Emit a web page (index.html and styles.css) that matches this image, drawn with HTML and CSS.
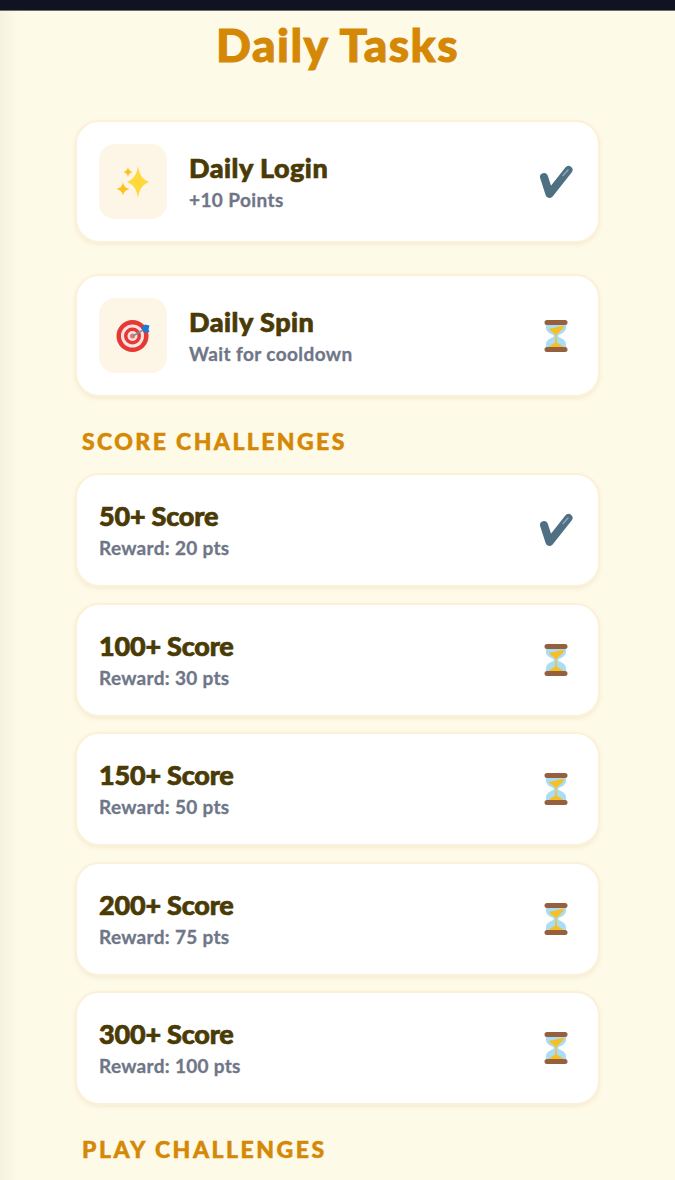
FILE: index.html
```html
<!DOCTYPE html>
<html lang="en">
<head>
  <meta charset="UTF-8">
  <meta name="viewport" content="width=device-width, initial-scale=1.0">
  <title>Daily Tasks</title>
  <link rel="stylesheet" href="styles.css">
</head>
<body>
  <svg class="sprites" width="0" height="0" aria-hidden="true">
    <symbol id="check" viewBox="0 0 34 34">
      <path d="M5 12 L10.500 29 L29.500 5" fill="none" stroke="#4f6f82" stroke-width="8" stroke-linecap="round" stroke-linejoin="round"/>
      <path d="M24 10.500 L29 5" fill="none" stroke="#8fa6b3" stroke-width="1.500" stroke-linecap="round"/>
    </symbol>
    <symbol id="hourglass" viewBox="0 0 34 34">
      <path d="M7 3 H27 V9 C27 14 20 15 19 17 C20 19 27 20 27 25 V31 H7 V25 C7 20 14 19 15 17 C14 15 7 14 7 9 Z" fill="#a9dcf5"/>
      <path d="M10 9.500 C15 10 20 6.500 25 7 C25 11 18.500 13 17.500 17 C16 14 11 13 10 9.500 Z" fill="#f6bf26"/>
      <path d="M16.500 16 H17.500 L18 24 C21 25.500 24 26.500 25 30 H9 C10 26.500 13 25.500 16 24 Z" fill="#f6bf26"/>
      <rect x="5.500" y="1" width="23" height="5" rx="2.500" fill="#96603f"/>
      <rect x="5.500" y="28" width="23" height="5" rx="2.500" fill="#96603f"/>
    </symbol>
  </svg>

  <div class="topbar"></div>

  <main class="page">
    <h1 class="page-title">Daily Tasks</h1>

    <div class="daily-list">
      <div class="task-card">
        <div class="task-icon">
          <svg width="40" height="48" viewBox="0 0 40 48">
            <path d="M25 8 C26.500 17 29 21 36 24 C29 27 26.500 31 25 40 C23.500 31 21 27 14 24 C21 21 23.500 17 25 8 Z" fill="#ffd83b"/>
            <path d="M15 9 C15.700 12 16.800 13.300 19.500 14 C16.800 14.700 15.700 16 15 19 C14.300 16 13.200 14.700 10.500 14 C13.200 13.300 14.300 12 15 9 Z" fill="#fcc21b"/>
            <path d="M10 24 C10.800 28 12.300 30 16.500 31 C12.300 32 10.800 34 10 38 C9.200 34 7.700 32 3.500 31 C7.700 30 9.200 28 10 24 Z" fill="#fcc21b"/>
          </svg>
        </div>
        <div class="task-text">
          <div class="task-name">Daily Login</div>
          <div class="task-sub">+10 Points</div>
        </div>
        <svg class="task-status"><use href="#check"/></svg>
      </div>

      <div class="task-card">
        <div class="task-icon">
          <svg width="40" height="40" viewBox="0 0 40 40">
            <circle cx="19.500" cy="20" r="16" fill="#e53935"/>
            <circle cx="19.500" cy="20" r="11.500" fill="#fbe3e0"/>
            <circle cx="19.500" cy="20" r="8.500" fill="#e53935"/>
            <circle cx="19.500" cy="20" r="5" fill="#fbe3e0"/>
            <circle cx="19.500" cy="20" r="2.500" fill="#e57373"/>
            <path d="M20 20 L30 14" stroke="#78909c" stroke-width="1.500"/>
            <path d="M28 12 L32 8.500 L36.500 9.500 L35.500 13.500 L36.500 16 L32 17 Z" fill="#1e78d5"/>
          </svg>
        </div>
        <div class="task-text">
          <div class="task-name">Daily Spin</div>
          <div class="task-sub">Wait for cooldown</div>
        </div>
        <svg class="task-status"><use href="#hourglass"/></svg>
      </div>
    </div>

    <h2 class="section-title">Score Challenges</h2>

    <div class="challenge-list">
      <div class="task-card challenge">
        <div class="task-text">
          <div class="task-name">50+ Score</div>
          <div class="task-sub">Reward: 20 pts</div>
        </div>
        <svg class="task-status"><use href="#check"/></svg>
      </div>
      <div class="task-card challenge">
        <div class="task-text">
          <div class="task-name">100+ Score</div>
          <div class="task-sub">Reward: 30 pts</div>
        </div>
        <svg class="task-status"><use href="#hourglass"/></svg>
      </div>
      <div class="task-card challenge">
        <div class="task-text">
          <div class="task-name">150+ Score</div>
          <div class="task-sub">Reward: 50 pts</div>
        </div>
        <svg class="task-status"><use href="#hourglass"/></svg>
      </div>
      <div class="task-card challenge">
        <div class="task-text">
          <div class="task-name">200+ Score</div>
          <div class="task-sub">Reward: 75 pts</div>
        </div>
        <svg class="task-status"><use href="#hourglass"/></svg>
      </div>
      <div class="task-card challenge">
        <div class="task-text">
          <div class="task-name">300+ Score</div>
          <div class="task-sub">Reward: 100 pts</div>
        </div>
        <svg class="task-status"><use href="#hourglass"/></svg>
      </div>
    </div>

    <h2 class="section-title play">Play Challenges</h2>
  </main>
</body>
</html>
```

FILE: styles.css
```css
html,
body {
  height: 100%;
}

body {
  margin: 0;
  overflow: hidden;
  font-family: 'Lato', 'Liberation Sans', sans-serif;
  background: linear-gradient(to right, #f6f2e0, #fefae8 18px);
}

.sprites {
  display: block;
}

.topbar {
  height: 10px;
  background-color: #0f1420;
  border-bottom: 1px solid #6b6c70;
}

.page {
  padding: 0 75px;
}

.page-title {
  margin: 0;
  padding-top: 9px;
  height: 62px;
  font-size: 46px;
  line-height: 50px;
  font-weight: 900;
  letter-spacing: 1.500px;
  text-align: center;
  color: #d48806;
  -webkit-text-stroke: 1px #d48806;
}

.daily-list {
  margin-top: 38px;
  display: flex;
  flex-direction: column;
  gap: 31px;
}

.task-card {
  box-sizing: border-box;
  height: 123px;
  padding: 0 25px 0 22px;
  display: flex;
  align-items: center;
  background: #fff;
  border: 2px solid #fbf1d8;
  border-radius: 24px;
  box-shadow: 0 2px 4px rgba(180, 150, 60, 0.12);
}

.task-card.challenge {
  height: 114px;
}

.task-icon {
  width: 68px;
  height: 75px;
  margin-right: 22px;
  flex-shrink: 0;
  display: flex;
  align-items: center;
  justify-content: center;
  background-color: #fdf6e7;
  border-radius: 16px;
}

.task-text {
  flex: 1;
}

.task-name {
  font-size: 27px;
  line-height: 32px;
  font-weight: 900;
  letter-spacing: 0.500px;
  color: #4a3a05;
  -webkit-text-stroke: 0.700px #4a3a05;
}

.challenge .task-name {
  letter-spacing: -0.200px;
}

.task-sub {
  margin-top: 4px;
  font-size: 19px;
  line-height: 24px;
  font-weight: 700;
  letter-spacing: 0.400px;
  color: #6f7687;
  -webkit-text-stroke: 0.300px #6f7687;
}

.challenge .task-sub {
  letter-spacing: 0.300px;
}

.task-status {
  width: 34px;
  height: 34px;
  flex-shrink: 0;
}

.section-title {
  margin: 30px 0 18px 7px;
  font-size: 23px;
  line-height: 28px;
  font-weight: 900;
  letter-spacing: 2.400px;
  text-transform: uppercase;
  color: #d48806;
  -webkit-text-stroke: 0.500px #d48806;
}

.challenge-list {
  display: flex;
  flex-direction: column;
  gap: 15.500px;
}

.section-title.play {
  margin-top: 30px;
  letter-spacing: 2.500px;
}
```
